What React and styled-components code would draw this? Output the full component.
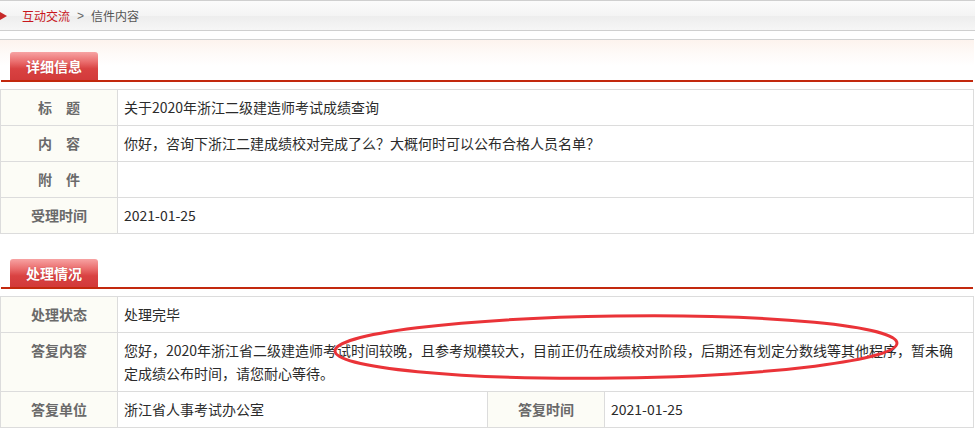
import React from 'react';
import styled, { createGlobalStyle } from 'styled-components';

const GlobalStyle = createGlobalStyle`
  html, body {
    margin: 0;
    padding: 0;
    background: #fff;
  }
  body {
    font-family: "Microsoft YaHei", "Noto Sans CJK SC", "Noto Sans", sans-serif;
    font-size: 14px;
    color: #333;
  }
`;

const Page = styled.div`
  position: relative;
  width: 975px;
  height: 432px;
  overflow: hidden;
`;

const Crumbs = styled.div`
  display: flex;
  align-items: center;
  height: 31px;
  box-sizing: border-box;
  border-top: 1px solid #cfcfcf;
  border-bottom: 1px solid #cfcfcf;
  background: linear-gradient(#fbfbfb 0%, #f4f4f4 50%, #ededed 52%, #f6f6f6 100%);
  font-size: 12px;
  color: #555;
`;

const CrumbArrow = styled.svg`
  width: 7px;
  height: 8px;
  margin-right: 15px;
  flex: none;
`;

const CrumbLink = styled.a`
  color: #c8161d;
  text-decoration: none;
`;

const CrumbSep = styled.span`
  margin: 0 7px;
  color: #666;
  font-family: "Liberation Sans", sans-serif;
`;

const Panel = styled.div`
  margin-top: ${(p) => (p.$top ? '8px' : '0')};
  width: 974px;
  border-top: ${(p) => (p.$top ? '1px solid #d2d2d2' : 'none')};
  background: ${(p) =>
    p.$top ? 'linear-gradient(#fdf3ee 0px, #fefaf8 14px, #fff 26px)' : 'transparent'};
`;

const SectionHead = styled.div`
  display: flex;
  align-items: flex-end;
  padding: ${(p) => (p.$first ? '12px' : '25px')} 0 0 9px;
  margin: 0 1px;
  border-bottom: 2px solid #c3290e;
`;

const Tab = styled.div`
  width: 88px;
  height: 28px;
  display: flex;
  align-items: center;
  justify-content: center;
  border-radius: 3px 3px 0 0;
  background: linear-gradient(#f7a3a3 0%, #ea6d6d 35%, #d94242 60%, #d23a3a 100%);
  color: #fff;
  font-weight: bold;
  font-size: 14px;
  text-shadow: 0 0 1px rgba(150, 20, 20, 0.5);
`;

const Table = styled.div`
  margin-top: 7px;
  width: 974px;
  box-sizing: border-box;
  border-top: 1px solid #dcdcdc;
  border-left: 1px solid #dcdcdc;
`;

const Row = styled.div`
  display: grid;
  grid-template-columns: ${(p) => (p.$split ? '117px 370px 117px 1fr' : '117px 1fr')};
`;

const Label = styled.div`
  box-sizing: border-box;
  padding: 6px 4px;
  min-height: 36px;
  line-height: 23px;
  border-right: 1px solid #dcdcdc;
  border-bottom: 1px solid #dcdcdc;
  background: #fcfcf6;
  color: #6a6a6a;
  font-weight: bold;
  text-align: center;
  white-space: pre;
`;

const Value = styled.div`
  box-sizing: border-box;
  padding: 6px 10px 6px 6px;
  min-height: 36px;
  line-height: 23px;
  border-right: 1px solid #dcdcdc;
  border-bottom: 1px solid #dcdcdc;
  color: #2b2b2b;
`;

const Mark = styled.svg`
  position: absolute;
  left: 0;
  top: 0;
  width: 975px;
  height: 432px;
  pointer-events: none;
`;

const details = [
  ['标　题', '关于2020年浙江二级建造师考试成绩查询'],
  ['内　容', '你好，咨询下浙江二建成绩校对完成了么？大概何时可以公布合格人员名单？'],
  ['附　件', ''],
  ['受理时间', '2021-01-25'],
];

export default function App() {
  return (
    <Page>
      <GlobalStyle />
      <Crumbs>
        <CrumbArrow viewBox="0 0 7 8">
          <polygon points="0,0 7,4 0,8" fill="#c62828" />
        </CrumbArrow>
        <CrumbLink href="#">互动交流</CrumbLink>
        <CrumbSep>&gt;</CrumbSep>
        <span>信件内容</span>
      </Crumbs>

      <Panel $top>
        <SectionHead $first>
          <Tab>详细信息</Tab>
        </SectionHead>
        <Table>
          {details.map(([k, v]) => (
            <Row key={k}>
              <Label>{k}</Label>
              <Value>{v}</Value>
            </Row>
          ))}
        </Table>
      </Panel>

      <Panel>
        <SectionHead>
          <Tab>处理情况</Tab>
        </SectionHead>
        <Table>
          <Row>
            <Label>处理状态</Label>
            <Value>处理完毕</Value>
          </Row>
          <Row>
            <Label>答复内容</Label>
            <Value>
              您好，2020年浙江省二级建造师考试时间较晚，且参考规模较大，目前正仍在成绩校对阶段，后期还有划定分数线等其他程序，暂未确定成绩公布时间，请您耐心等待。
            </Value>
          </Row>
          <Row $split>
            <Label>答复单位</Label>
            <Value>浙江省人事考试办公室</Value>
            <Label>答复时间</Label>
            <Value>2021-01-25</Value>
          </Row>
        </Table>
      </Panel>

      <Mark viewBox="0 0 975 432">
        <ellipse
          cx="616"
          cy="347"
          rx="281"
          ry="31"
          transform="rotate(-0.8 616 347)"
          fill="none"
          stroke="#ea3338"
          strokeWidth="3"
        />
      </Mark>
    </Page>
  );
}
